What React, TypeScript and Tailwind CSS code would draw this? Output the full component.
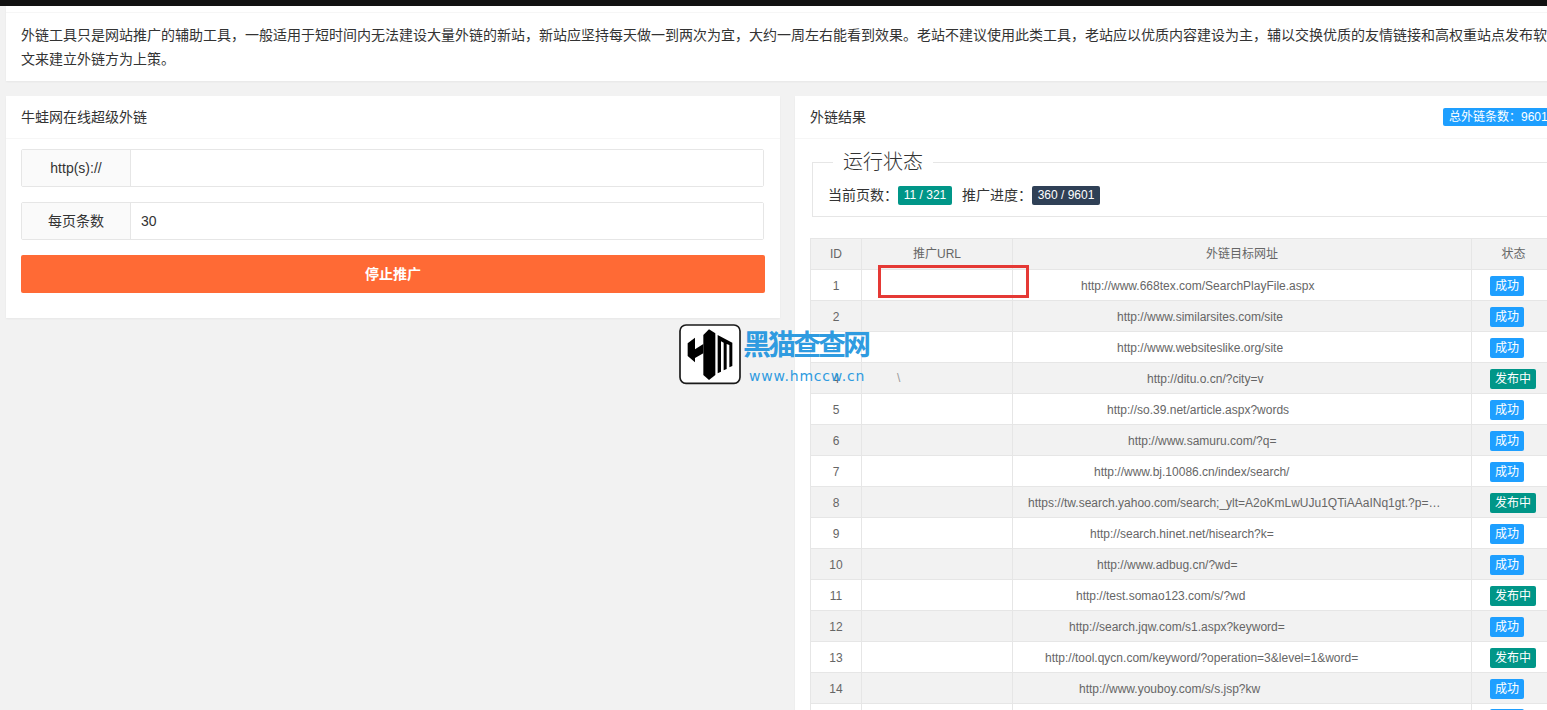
const ok = "ok";
const pub = "pub";
const rows = [
  { id: 1, url: "http://www.668tex.com/SearchPlayFile.aspx", pad: "pl-[68px]", s: ok },
  { id: 2, url: "http://www.similarsites.com/site", pad: "pl-[104px]", s: ok },
  { id: 3, url: "http://www.websiteslike.org/site", pad: "pl-[104px]", s: ok },
  { id: 4, url: "http://ditu.o.cn/?city=v", pad: "pl-[134px]", s: pub },
  { id: 5, url: "http://so.39.net/article.aspx?words", pad: "pl-[94px]", s: ok },
  { id: 6, url: "http://www.samuru.com/?q=", pad: "pl-[115px]", s: ok },
  { id: 7, url: "http://www.bj.10086.cn/index/search/", pad: "pl-[81px]", s: ok },
  { id: 8, url: "https://tw.search.yahoo.com/search;_ylt=A2oKmLwUJu1QTiAAaINq1gt.?p=word&ei=UTF-8", pad: "pl-[15px]", s: pub },
  { id: 9, url: "http://search.hinet.net/hisearch?k=", pad: "pl-[77px]", s: ok },
  { id: 10, url: "http://www.adbug.cn/?wd=", pad: "pl-[84px]", s: ok },
  { id: 11, url: "http://test.somao123.com/s/?wd", pad: "pl-[63px]", s: pub },
  { id: 12, url: "http://search.jqw.com/s1.aspx?keyword=", pad: "pl-[56px]", s: ok },
  { id: 13, url: "http://tool.qycn.com/keyword/?operation=3&level=1&word=", pad: "pl-[32px]", s: pub },
  { id: 14, url: "http://www.youboy.com/s/s.jsp?kw", pad: "pl-[66px]", s: ok },
];

function Status({ s }: { s: string }) {
  return s === ok ? (
    <span className="flex w-fit mt-px h-5 px-[5px] rounded-[2px] bg-[#1e9fff] text-white text-xs leading-5">成功</span>
  ) : (
    <span className="flex w-fit mt-px h-5 px-[5px] rounded-[2px] bg-[#009688] text-white text-xs leading-5">发布中</span>
  );
}

function Field({ label, value }: { label: string; value?: string }) {
  return (
    <div className="flex h-[38px] w-[743px] border border-[#e6e6e6] rounded-[2px]">
      <div className="w-[109px] shrink-0 flex items-center justify-center bg-[#fafafa] border-r border-[#e6e6e6] text-sm text-[#333]">
        {label}
      </div>
      <div className="flex-1 flex items-center pl-[10px] bg-white text-sm text-[#333]">{value}</div>
    </div>
  );
}

export default function App() {
  return (
    <div className="relative w-[1547px] h-[710px] overflow-hidden bg-[#f2f2f2] font-['Liberation_Sans','Noto_Sans_CJK_SC',sans-serif]">
      <div className="h-1.5 bg-[#111111]" />
      <div className="w-[1568px] pl-1.5 flex flex-col gap-[15px]">
        <div className="bg-white shadow-[0_1px_2px_rgba(0,0,0,0.05)]">
          <div className="h-[7px] border-b border-[#f6f6f6]" />
          <p className="px-[15px] py-2.5 text-sm leading-6 text-[#333]">
            外链工具只是网站推广的辅助工具，一般适用于短时间内无法建设大量外链的新站，新站应坚持每天做一到两次为宜，大约一周左右能看到效果。老站不建议使用此类工具，老站应以优质内容建设为主，辅以交换优质的友情链接和高权重站点发布软文来建立外链方为上策。
          </p>
        </div>

        <div className="flex gap-[15px] items-start">
          <div className="w-[774px] shrink-0 h-[222px] bg-white shadow-[0_1px_2px_rgba(0,0,0,0.05)]">
            <div className="h-[43px] flex items-center px-[15px] border-b border-[#f6f6f6] text-sm text-[#333]">
              牛蛙网在线超级外链
            </div>
            <div className="px-[15px] pt-[10px] flex flex-col gap-[15px]">
              <Field label="http(s)://" />
              <Field label="每页条数" value="30" />
              <button className="w-[744px] h-[38px] rounded-[2px] bg-[#ff6a35] text-white text-sm font-bold">停止推广</button>
            </div>
          </div>

          <div className="w-[773px] shrink-0 bg-white h-[620px] shadow-[0_1px_2px_rgba(0,0,0,0.05)]">
            <div className="h-[43px] flex items-center justify-between pl-[15px] border-b border-[#f6f6f6] text-sm text-[#333]">
              <span>外链结果</span>
              <span className="mr-[5px] h-[18px] w-[120px] px-[6px] rounded-[2px] bg-[#1e9fff] text-white text-xs leading-[18px] whitespace-nowrap">
                总外链条数：9601
              </span>
            </div>
            <div className="pl-[15px]">
              <fieldset className="ml-[2px] mt-[11px] h-[67px] border border-[#e6e6e6] pl-[15px]">
                <legend className="ml-[5px] px-2.5 text-xl leading-6 font-light text-[#333]">运行状态</legend>
                <div className="flex items-center h-5 mt-[11px] text-sm text-[#333] whitespace-nowrap">
                  <span>当前页数：</span>
                  <span className="h-[19px] w-[54px] rounded-[2px] bg-[#009688] text-white text-xs leading-[19px] text-center">11 / 321</span>
                  <span className="ml-[10px]">推广进度：</span>
                  <span className="h-[19px] w-[68px] rounded-[2px] bg-[#2f4056] text-white text-xs leading-[19px] text-center">360 / 9601</span>
                </div>
              </fieldset>
              <table className="mt-[21px] w-[745px] table-fixed border-collapse text-xs text-[#666]">
                <thead>
                  <tr className="h-[31px] bg-[#f2f2f2]">
                    <th className="w-[51px] border border-[#e6e6e6] font-normal">ID</th>
                    <th className="w-[151px] border border-[#e6e6e6] font-normal">推广URL</th>
                    <th className="w-[459px] border border-[#e6e6e6] font-normal">外链目标网址</th>
                    <th className="w-[84px] border border-[#e6e6e6] font-normal">状态</th>
                  </tr>
                </thead>
                <tbody>
                  {rows.map((r) => (
                    <tr key={r.id} className={"h-[31px] " + (r.id % 2 === 0 ? "bg-[#f2f2f2]" : "bg-white")}>
                      <td className="border border-[#e6e6e6] pt-px text-center">{r.id}</td>
                      <td className="border border-[#e6e6e6] pl-[35px] text-[#999]">{r.id === 4 ? "\\" : ""}</td>
                      <td className={"border border-[#e6e6e6] pt-px pr-[22px] truncate " + r.pad}>{r.url}</td>
                      <td className="border border-[#e6e6e6] pl-[18px]">
                        <Status s={r.s} />
                      </td>
                    </tr>
                  ))}
                  <tr className="h-[31px] bg-white">
                    <td className="border border-[#e6e6e6]" />
                    <td className="border border-[#e6e6e6]" />
                    <td className="border border-[#e6e6e6]" />
                    <td className="border border-[#e6e6e6] pl-[18px]">
                      <span className="flex w-[34px] h-5 rounded-[2px] bg-[#1e9fff]" />
                    </td>
                  </tr>
                </tbody>
              </table>
            </div>
          </div>
        </div>
      </div>

      <div className="absolute left-[878px] top-[265px] w-[151px] h-[33px] border-[3px] border-[#e53935]" />

      <div className="absolute left-[675px] top-[320px] flex items-start">
        <svg width="70" height="70" viewBox="0 0 210 210">
          <rect x="15" y="15" width="180" height="175" rx="18" fill="#ffffff" stroke="#1a1a1a" strokeWidth="5" />
          <path d="M85 45 102 28 121 40V165L102 180 85 165Z" fill="#000" />
          <path d="M38 70 60 53V88L85 72V100L60 114V127L38 108Z" fill="#000" />
          <path d="M128 45 172 68V138L163 142V75L155 72V147L146 151V68L138 64V155L128 160Z" fill="#000" />
        </svg>
        <div className="-ml-[2px] pt-[10px] w-[135px] text-[#2f9be0]">
          <div className="text-[28px] leading-8 font-bold tracking-[-3px] whitespace-nowrap">黑猫查查网</div>
          <div className="mt-[4px] pl-[6px] font-['DejaVu_Sans',sans-serif] text-[14px] leading-[20px] tracking-[0.8px] whitespace-nowrap">www.hmccw.cn</div>
        </div>
      </div>
    </div>
  );
}
